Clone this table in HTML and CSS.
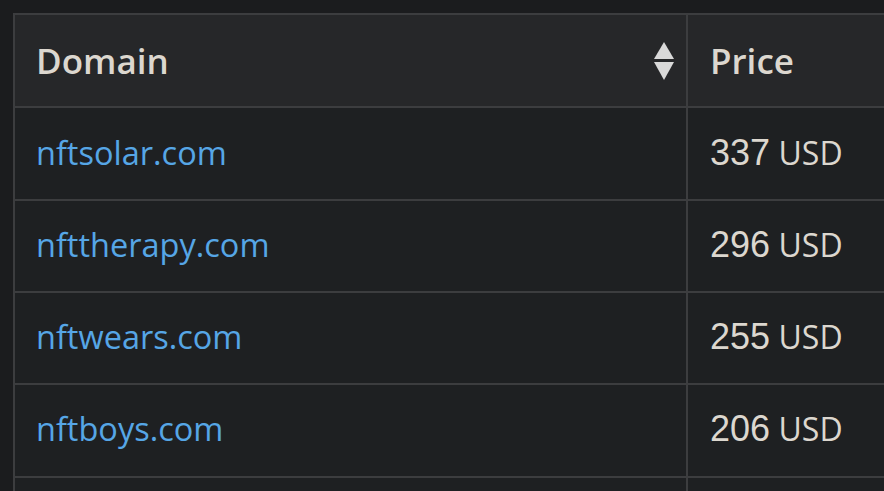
FILE: index.html
```html
<!DOCTYPE html>
<html lang="en">
<head>
    <meta charset="UTF-8">
    <meta name="viewport" content="width=device-width, initial-scale=1.0">
    <title>Domains</title>
    <link rel="stylesheet" href="styles.css">
</head>
<body>
    <table class="domains">
        <thead>
            <tr>
                <th class="col-domain">
                    <div class="th-inner">
                        <span>Domain</span>
                        <svg class="sort" width="22" height="40" viewBox="0 0 22 40">
                            <path d="M11 1 L21 18 L1 18 Z" fill="#d9d9d9"/>
                            <path d="M1 21 L21 21 L11 39 Z" fill="#d9d9d9"/>
                        </svg>
                    </div>
                </th>
                <th class="col-price">Price</th>
            </tr>
        </thead>
        <tbody>
            <tr>
                <td><a href="#">nftsolar.com</a></td>
                <td><span class="amount">337</span> <span class="currency">USD</span></td>
            </tr>
            <tr>
                <td><a href="#">nfttherapy.com</a></td>
                <td><span class="amount">296</span> <span class="currency">USD</span></td>
            </tr>
            <tr>
                <td><a href="#">nftwears.com</a></td>
                <td><span class="amount">255</span> <span class="currency">USD</span></td>
            </tr>
            <tr>
                <td><a href="#">nftboys.com</a></td>
                <td><span class="amount">206</span> <span class="currency">USD</span></td>
            </tr>
            <tr class="more">
                <td></td>
                <td></td>
            </tr>
        </tbody>
    </table>
</body>
</html>
```

FILE: styles.css
```css
html, body {
    overflow: hidden;
}

body {
    margin: 0;
    padding: 13px;
    background-color: #1b1c1e;
    color: #dcd7cf;
    font-family: "Open Sans", sans-serif;
}

.domains {
    width: 1100px;
    border-collapse: collapse;
    border: 2px solid #3c3d3f;
}

.domains th,
.domains td {
    border: 2px solid #3c3d3f;
    text-align: left;
    vertical-align: middle;
    padding: 0 21px;
}

.domains th {
    height: 91.4px;
    background-color: #262729;
    font-size: 35px;
    font-weight: 600;
}

.domains td {
    height: 87.3px;
    padding-bottom: 3px;
    background-color: #1e2022;
    font-size: 32.5px;
}

.domains td:last-child,
.domains th:last-child {
    padding-left: 22px;
}

.col-domain {
    width: 639px;
    padding-right: 11px !important;
}

.th-inner {
    display: flex;
    align-items: center;
    justify-content: space-between;
}

.sort {
    filter: blur(0.4px);
}

.domains a {
    color: #56a6e6;
    text-decoration: none;
}

.amount {
    font-family: "Liberation Sans", Arial, sans-serif;
    font-size: 36px;
}

.currency {
    font-size: 32px;
}
```
